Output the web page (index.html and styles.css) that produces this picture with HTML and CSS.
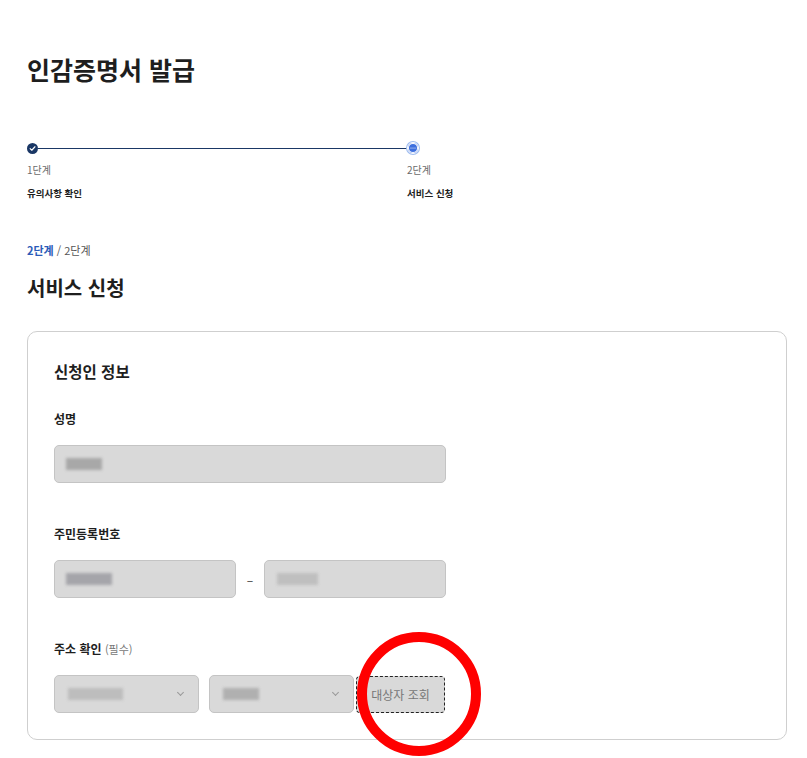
FILE: index.html
```html
<!DOCTYPE html>
<html lang="ko">
<head>
    <meta charset="UTF-8">
    <meta name="viewport" content="width=device-width, initial-scale=1.0">
    <title>인감증명서 발급</title>
    <link rel="stylesheet" href="styles.css">
</head>
<body>
    <div class="page">
        <h1 class="page-title">인감증명서 발급</h1>

        <div class="stepper">
            <div class="step step-done">
                <div class="step-track">
                    <span class="step-dot">
                        <svg width="7" height="7" viewBox="0 0 8 8"><path d="M1.3 4.2 L3.2 6 L6.8 2" fill="none" stroke="#fff" stroke-width="1.3" stroke-linecap="round" stroke-linejoin="round"/></svg>
                    </span>
                    <span class="step-line"></span>
                </div>
                <p class="step-num">1단계</p>
                <p class="step-name">유의사항 확인</p>
            </div>
            <div class="step step-current">
                <div class="step-track">
                    <span class="step-dot">
                        <svg width="6" height="2" viewBox="0 0 6 2"><circle cx="1" cy="1" r="0.6" fill="#fff"/><circle cx="3" cy="1" r="0.6" fill="#fff"/><circle cx="5" cy="1" r="0.6" fill="#fff"/></svg>
                    </span>
                </div>
                <p class="step-num">2단계</p>
                <p class="step-name">서비스 신청</p>
            </div>
        </div>

        <p class="crumb"><b>2단계</b> / 2단계</p>
        <h2 class="section-title">서비스 신청</h2>

        <div class="card">
            <h3 class="card-title">신청인 정보</h3>

            <label class="field-label">성명</label>
            <div class="input input-wide"><span class="blur blur-name"></span></div>

            <label class="field-label">주민등록번호</label>
            <div class="rrn-row">
                <div class="input input-half"><span class="blur blur-rrn1"></span></div>
                <span class="rrn-dash">–</span>
                <div class="input input-half"><span class="blur blur-rrn2"></span></div>
            </div>

            <label class="field-label">주소 확인 <span class="required">(필수)</span></label>
            <div class="addr-row">
                <div class="input select"><span class="blur blur-sel1"></span><span class="chev"></span></div>
                <div class="input select"><span class="blur blur-sel2"></span><span class="chev"></span></div>
                <button class="lookup-btn" type="button">대상자 조회</button>
                <svg class="mark" width="130" height="130" viewBox="0 0 130 130"><circle cx="65" cy="65" r="57" fill="none" stroke="#ff0000" stroke-width="10"/></svg>
            </div>
        </div>
    </div>
</body>
</html>
```

FILE: styles.css
```css
body, html {
    margin: 0;
    padding: 0;
    background: #fff;
    font-family: "Noto Sans CJK KR", "Noto Sans", sans-serif;
    color: #1e1e1e;
}
p, h1, h2, h3 {
    margin: 0;
}
.page {
    padding: 51px 20px 18px 27px;
}
.page-title {
    font-size: 25px;
    line-height: 36px;
    font-weight: 700;
}

/* stepper */
.stepper {
    display: flex;
    margin-top: 55px;
}
.step-done {
    flex: 0 0 380px;
}
.step-track {
    display: flex;
    align-items: center;
    height: 12px;
}
.step-dot {
    display: flex;
    align-items: center;
    justify-content: center;
    box-sizing: border-box;
    border-radius: 50%;
    flex: none;
}
.step-done .step-dot {
    width: 11px;
    height: 11px;
    background: #1a3765;
}
.step-current .step-dot {
    width: 12px;
    height: 12px;
    background: #3d6fde;
    box-shadow: 0 0 0 1px #fff inset, 0 0 0 1px #9fbdf0;
    border: 1px solid #fff;
}
.step-line {
    flex: 1;
    height: 1px;
    background: #1a3765;
    margin-right: -6px;
}
.step-num {
    margin-top: 8px;
    font-size: 10px;
    line-height: 16px;
    color: #6b6b6b;
}
.step-name {
    margin-top: 7px;
    font-size: 9.5px;
    line-height: 16px;
    font-weight: 700;
}

.crumb {
    margin-top: 40px;
    font-size: 11px;
    line-height: 18px;
    color: #555;
}
.crumb b {
    color: #2b5bb8;
}
.section-title {
    margin-top: 15px;
    font-size: 20px;
    line-height: 28px;
    font-weight: 700;
}

/* card */
.card {
    margin-top: 29px;
    width: 760px;
    box-sizing: border-box;
    border: 1px solid #cfcfcf;
    border-radius: 10px;
    padding: 28px 26px 26px;
}
.card-title {
    font-size: 15.5px;
    line-height: 22px;
    font-weight: 700;
    margin-bottom: 28px;
}
.field-label {
    display: block;
    font-size: 12px;
    line-height: 18px;
    font-weight: 700;
    margin-bottom: 17px;
}
.required {
    font-weight: 400;
    font-size: 11px;
    color: #777;
}
.input {
    position: relative;
    box-sizing: border-box;
    height: 38px;
    background: #d9d9d9;
    border: 1px solid #c4c4c4;
    border-radius: 5px;
    display: flex;
    align-items: center;
    padding-left: 11px;
}
.input-wide {
    width: 392px;
    margin-bottom: 42px;
}
.rrn-row {
    display: flex;
    align-items: center;
    margin-bottom: 42px;
}
.input-half {
    width: 182px;
}
.rrn-dash {
    width: 28px;
    text-align: center;
    font-size: 12px;
    color: #333;
}
.addr-row {
    position: relative;
    display: flex;
    align-items: center;
}
.select {
    width: 145px;
    margin-right: 10px;
    padding-left: 13px;
}
.select + .select {
    margin-right: 2px;
}
.chev {
    position: absolute;
    right: 15px;
    top: 14px;
    width: 4px;
    height: 4px;
    border-right: 1px solid #999;
    border-bottom: 1px solid #999;
    transform: rotate(45deg);
}
.lookup-btn {
    width: 89px;
    height: 37px;
    box-sizing: border-box;
    background: #d9d9d9;
    border: 1px dashed #222;
    border-radius: 4px;
    font-family: inherit;
    font-size: 12px;
    color: #777;
    padding: 0;
}
.blur {
    display: block;
    height: 12px;
    background: #a8a8a8;
    filter: blur(1.5px);
}
.blur-name { width: 36px; }
.blur-rrn1 { width: 46px; background: #a5a5aa; }
.blur-rrn2 { width: 41px; margin-left: 1px; background: #bfbfbf; }
.blur-sel1 { width: 55px; background: #bdbdbd; }
.blur-sel2 { width: 36px; background: #b0b0b0; }

/* red annotation ring */
.mark {
    position: absolute;
    left: 300px;
    top: -46px;
}
```
